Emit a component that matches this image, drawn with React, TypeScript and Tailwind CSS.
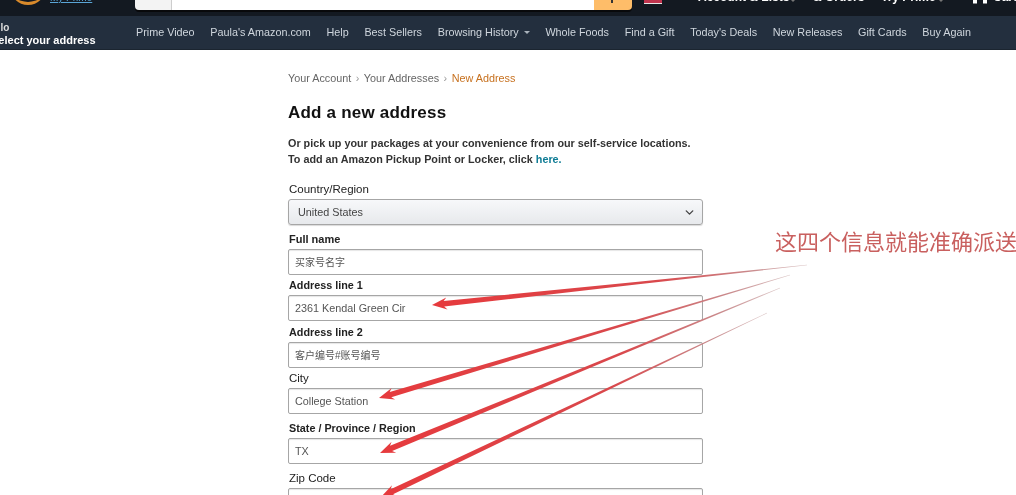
import { ChevronDown } from 'lucide-react';

const NAV_LINKS = [
  { label: 'Prime Video', caret: false },
  { label: "Paula's Amazon.com", caret: false },
  { label: 'Help', caret: false },
  { label: 'Best Sellers', caret: false },
  { label: 'Browsing History', caret: true },
  { label: 'Whole Foods', caret: false },
  { label: 'Find a Gift', caret: false },
  { label: "Today's Deals", caret: false },
  { label: 'New Releases', caret: false },
  { label: 'Gift Cards', caret: false },
  { label: 'Buy Again', caret: false },
];

const FIELDS = [
  { label: 'Full name', value: '买家号名字', labelClass: 'font-bold text-[11px]', valueClass: 'text-[10px]', mt: 'mt-[7px]' },
  { label: 'Address line 1', value: '2361 Kendal Green Cir', labelClass: 'font-bold text-[10.8px]', valueClass: 'text-[10.8px]', mt: 'mt-[3px]' },
  { label: 'Address line 2', value: '客户编号#账号编号', labelClass: 'font-bold text-[10.8px]', valueClass: 'text-[10px]', mt: 'mt-[4px]' },
  { label: 'City', value: 'College Station', labelClass: 'text-[11.5px]', valueClass: 'text-[10.8px]', mt: 'mt-[3px]' },
  { label: 'State / Province / Region', value: 'TX', labelClass: 'font-bold text-[10.8px]', valueClass: 'text-[10.8px]', mt: 'mt-[7px]' },
  { label: 'Zip Code', value: '', labelClass: 'text-[11.5px]', valueClass: 'text-[10.8px]', mt: 'mt-[7px]' },
];

// Hand-drawn annotation arrows: thin, faded tail on the right, thick just behind the head.
const ARROWS = [
  { id: 'a1', tail: [807, 265], tip: [432, 305] },
  { id: 'a2', tail: [790, 275], tip: [379, 398] },
  { id: 'a3', tail: [780, 288], tip: [380, 453] },
  { id: 'a4', tail: [767, 313], tip: [381, 497] },
];

function Arrow({ id, tail, tip }: { id: string; tail: number[]; tip: number[] }) {
  const dx = tail[0] - tip[0];
  const dy = tail[1] - tip[1];
  const len = Math.hypot(dx, dy);
  const ux = dx / len;
  const uy = dy / len;
  const nx = -uy;
  const ny = ux;
  const at = (along: number, side: number) =>
    `${tip[0] + ux * along + nx * side},${tip[1] + uy * along + ny * side}`;
  const points = [
    at(0, 0),
    at(15, 6),
    at(12, 2.8),
    at(len * 0.55, 1.3),
    at(len, 0.3),
    at(len, -0.3),
    at(len * 0.55, -1.3),
    at(12, -2.8),
    at(15, -6),
  ].join(' ');
  return (
    <>
      <linearGradient id={id} gradientUnits="userSpaceOnUse" x1={tip[0]} y1={tip[1]} x2={tail[0]} y2={tail[1]}>
        <stop offset="0" stopColor="#e63a3d" />
        <stop offset="0.6" stopColor="#d9484c" />
        <stop offset="0.85" stopColor="#c98a8c" />
        <stop offset="1" stopColor="#dcc8c8" />
      </linearGradient>
      <polygon points={points} fill={`url(#${id})`} />
    </>
  );
}

function TopBar() {
  return (
    <div className="flex h-[16px] overflow-hidden bg-[#131921]">
      <div className="relative w-[135px] shrink-0">
        <div className="absolute left-[10px] top-[-14px] h-[19px] w-[36px] rounded-b-[18px] border-b-[3px] border-[#d98a2b]" />
        <span className="absolute left-[50px] top-[-9px] text-[10px] leading-[14px] text-[#5aa5d6] underline">My Prime</span>
      </div>
      <div className="flex h-[10px] w-[497px] shrink-0 overflow-hidden rounded-b-[4px] shadow-[0_2px_0_#08090b]">
        <div className="w-[37px] border-r border-[#cdcdcd] bg-[#f3f3f3]" />
        <div className="flex-1 bg-white" />
        <div className="relative w-[38px] bg-[#febd69]">
          <div className="absolute left-[17px] top-0 h-[3px] w-[2px] bg-[#333]" />
        </div>
      </div>
      <div className="ml-[12px] flex h-[5px] w-[18px] shrink-0 flex-col">
        <div className="h-[3px] bg-[#c0344e]" />
        <div className="h-[1px] bg-[#e8e8e8]" />
      </div>
      <div className="relative flex-1 text-[12px] font-bold leading-[14px] text-white">
        <span className="absolute left-[36px] top-[-10px]">Account &amp; Lists</span>
        <span className="absolute left-[129px] top-0 h-0 w-0 border-x-[2px] border-t-[2px] border-x-transparent border-t-[#777]" />
        <span className="absolute left-[151px] top-[-10px]">&amp; Orders</span>
        <span className="absolute left-[219px] top-[-10px]">Try Prime</span>
        <span className="absolute left-[277px] top-0 h-0 w-0 border-x-[2px] border-t-[2px] border-x-transparent border-t-[#777]" />
        <svg className="absolute left-[309px] top-0" width="18" height="5" viewBox="0 0 18 5">
          <rect x="2" y="0" width="4" height="3.5" fill="#fff" />
          <rect x="12" y="0" width="4" height="3.5" fill="#fff" />
        </svg>
        <span className="absolute left-[331px] top-[-10px]">Cart</span>
      </div>
    </div>
  );
}

function NavBar() {
  return (
    <div className="flex h-[34px] items-center gap-[15.7px] border-b border-[#1b2530] bg-[#232f3e] text-[10.8px] text-[#cfd6dd]">
      <div className="relative -mr-[15.7px] h-full w-[136px] shrink-0 overflow-hidden text-white">
        <span className="absolute left-[-15px] top-[6px] text-[10px] font-bold leading-[12px] text-[#ddd]">Hello</span>
        <span className="absolute left-[-9px] top-[16px] whitespace-nowrap text-[11px] font-bold leading-[16px]">Select your address</span>
      </div>
      {NAV_LINKS.map((l) => (
        <span key={l.label} className="flex items-center whitespace-nowrap">
          {l.label}
          {l.caret ? (
            <span className="ml-[5px] h-0 w-0 border-x-[3px] border-t-[3px] border-x-transparent border-t-[#aab3bc]" />
          ) : null}
        </span>
      ))}
    </div>
  );
}

function Field({ label, value, labelClass, valueClass, mt }: { label: string; value: string; labelClass: string; valueClass: string; mt: string }) {
  return (
    <div className={mt}>
      <div className={`pl-px leading-[14px] text-[#222] ${labelClass}`}>{label}</div>
      <div className={`mt-[3px] flex h-[26px] items-center rounded-[2px] border border-[#a6a6a6] bg-white pl-[6px] text-[#555] shadow-[inset_0_1px_1px_rgba(0,0,0,0.1)] ${valueClass}`}>
        {value}
      </div>
    </div>
  );
}

export default function App() {
  return (
    <div className="relative h-[495px] w-[1016px] overflow-hidden bg-white font-['Liberation_Sans','Noto_Sans_CJK_SC',sans-serif] blur-[0.4px]">
      <TopBar />
      <NavBar />

      <div className="ml-[288px] w-[415px]">
        <div className="mt-[21px] flex items-center text-[10.8px] leading-[14px] text-[#666]">
          <span>Your Account</span>
          <span className="mx-[4.5px] text-[#999]">›</span>
          <span>Your Addresses</span>
          <span className="mx-[4.5px] text-[#999]">›</span>
          <span className="text-[#c7711f]">New Address</span>
        </div>

        <h1 className="mt-[17px] text-[17px] font-bold leading-[22px] tracking-[0.2px] text-[#111]">Add a new address</h1>

        <p className="mt-[11px] whitespace-nowrap text-[10.8px] font-bold leading-[16px] text-[#333]">
          Or pick up your packages at your convenience from our self-service locations.
          <br />
          To add an Amazon Pickup Point or Locker, click <span className="text-[#0f7c95]">here.</span>
        </p>

        <div className="mt-[15px] pl-px text-[11.5px] leading-[14px] text-[#222]">Country/Region</div>
        <div className="mt-[3px] flex h-[26px] items-center justify-between rounded-[3px] border border-[#a6a6a6] bg-gradient-to-b from-[#f7f8fa] to-[#e7e9ec] pl-[9px] pr-[6px] text-[10.8px] text-[#444] shadow-[0_1px_1px_rgba(0,0,0,0.15)]">
          <span>United States</span>
          <ChevronDown size={13} strokeWidth={2.5} className="text-[#444]" />
        </div>

        {FIELDS.map((f) => (
          <Field key={f.label} {...f} />
        ))}
      </div>

      {/* annotation drawn over the form */}
      <svg className="absolute left-0 top-0" width="1016" height="495" viewBox="0 0 1016 495">
        {ARROWS.map((a) => (
          <Arrow key={a.id} id={a.id} tail={a.tail} tip={a.tip} />
        ))}
      </svg>
      <span className="absolute left-[775px] top-[226px] whitespace-nowrap font-['Noto_Sans_CJK_SC',serif] text-[22px] leading-[28px] text-[#c9605f]">
        这四个信息就能准确派送
      </span>
    </div>
  );
}
